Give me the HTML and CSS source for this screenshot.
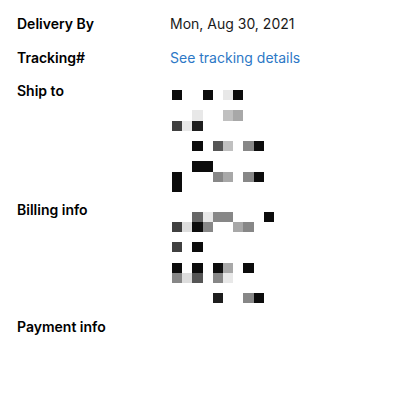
FILE: index.html
```html
<!DOCTYPE html>
<html>
<head>
<meta charset="utf-8">
<link rel="stylesheet" href="styles.css">
</head>
<body>
<div class="page">
  <div class="row delivery">
    <div class="label">Delivery By</div>
    <div class="value">Mon, Aug 30, 2021</div>
  </div>
  <div class="row tracking">
    <div class="label">Tracking#</div>
    <div class="value link">See tracking details</div>
  </div>
  <div class="row ship">
    <div class="label">Ship to</div>
    <div class="pix">
      <div class="pr"><i class="k"></i><i></i><i></i><i class="k"></i><i></i><i class="vl"></i><i class="k"></i></div>
      <div class="pr"></div>
      <div class="pr"><i></i><i></i><i class="vl"></i><i></i><i></i><i class="l"></i><i class="g2"></i></div>
      <div class="pr"><i class="d2"></i><i class="vl"></i><i class="d1"></i></div>
      <div class="pr"></div>
      <div class="pr"><i></i><i></i><i class="k"></i><i></i><i class="d3"></i><i class="l"></i><i></i><i class="g"></i><i class="k"></i></div>
      <div class="pr"></div>
      <div class="pr"><i></i><i></i><i class="k"></i><i class="k"></i></div>
      <div class="pr"><i class="k"></i><i></i><i></i><i></i><i class="g"></i><i class="g2"></i><i></i><i class="g"></i><i class="k"></i></div>
      <div class="pr"><i class="k"></i></div>
    </div>
  </div>
  <div class="row billing">
    <div class="label">Billing info</div>
    <div class="pix">
      <div class="pr"><i></i><i></i><i class="d4"></i><i class="vl"></i><i class="g"></i><i class="g"></i><i></i><i></i><i></i><i class="k"></i></div>
      <div class="pr"><i class="d2"></i><i class="l2"></i><i class="k"></i><i class="g"></i><i></i><i></i><i class="g2"></i><i class="g"></i></div>
      <div class="pr"></div>
      <div class="pr"><i class="d2"></i><i></i><i class="k"></i></div>
      <div class="pr"></div>
      <div class="pr"><i class="k"></i><i></i><i class="k"></i><i></i><i class="k"></i><i class="g2"></i><i></i><i class="k"></i></div>
      <div class="pr"><i class="g"></i><i class="l2"></i><i class="d3"></i><i></i><i class="g"></i><i class="vl"></i></div>
      <div class="pr"></div>
      <div class="pr"><i></i><i></i><i></i><i></i><i class="d1"></i><i></i><i></i><i class="g"></i><i class="k"></i></div>
    </div>
  </div>
  <div class="row payment">
    <div class="label">Payment info</div>
  </div>
</div>
</body>
</html>
```

FILE: styles.css
```css
html, body {
  margin: 0;
  padding: 0;
  background: #ffffff;
}
body {
  font-family: Inter, "Noto Sans", "Liberation Sans", sans-serif;
  font-size: 14px;
  line-height: 20px;
  color: #111111;
}
.page {
  display: flex;
  flex-direction: column;
  padding: 14px 0 0 17px;
}
.row {
  display: flex;
  align-items: flex-start;
}
.label {
  width: 153px;
  flex: none;
  font-weight: 600;
  color: #000000;
}
.value {
  color: #1a1a1a;
}
.link {
  color: #2d78c6;
}
.tracking { margin-top: 14px; }
.ship { margin-top: 13px; }
.billing { margin-top: 8px; }
.payment { margin-top: 13.5px; }
.pix {
  display: flex;
  flex-direction: column;
  margin-left: 2px;
}
.ship .pix { margin-top: 9px; }
.billing .pix { margin-top: 11.7px; }
.pr {
  display: flex;
  height: 10.2px;
}
.pr i {
  display: block;
  width: 10.2px;
  height: 10.2px;
  flex: none;
}
.pr i.k { background: #0c0c0c; }
.pr i.d1 { background: #1e1e1e; }
.pr i.d2 { background: #404040; }
.pr i.d3 { background: #555555; }
.pr i.d4 { background: #666666; }
.pr i.g { background: #878787; }
.pr i.g2 { background: #a8a8a8; }
.pr i.l { background: #c0c0c0; }
.pr i.l2 { background: #dddddd; }
.pr i.vl { background: #e8e8e8; }
```
